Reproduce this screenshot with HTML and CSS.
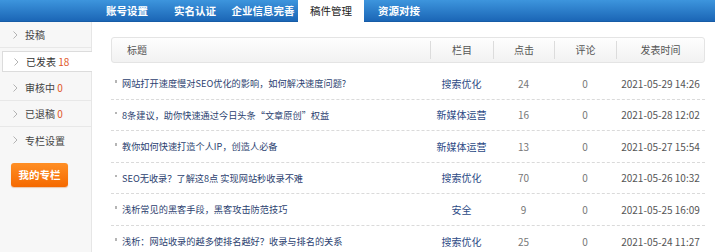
FILE: index.html
```html
<!DOCTYPE html>
<html lang="zh-CN">
<head>
<meta charset="utf-8">
<title>稿件管理</title>
<link rel="stylesheet" href="styles.css">
</head>
<body>
<header class="topbar">
  <nav class="tabs">
    <a class="tab">账号设置</a>
    <a class="tab">实名认证</a>
    <a class="tab">企业信息完善</a>
    <a class="tab active">稿件管理</a>
    <a class="tab">资源对接</a>
  </nav>
</header>
<div class="main">
  <aside class="sidebar">
    <ul class="menu">
      <li class="item"><svg class="arrow" viewBox="0 0 5 8"><polyline points="0.5,0.5 4,4 0.5,7.5"/></svg>投稿</li>
      <li class="item active"><svg class="arrow" viewBox="0 0 5 8"><polyline points="0.5,0.5 4,4 0.5,7.5"/></svg>已发表 <span class="num">18</span></li>
      <li class="item"><svg class="arrow" viewBox="0 0 5 8"><polyline points="0.5,0.5 4,4 0.5,7.5"/></svg>审核中 <span class="num">0</span></li>
      <li class="item"><svg class="arrow" viewBox="0 0 5 8"><polyline points="0.5,0.5 4,4 0.5,7.5"/></svg>已退稿 <span class="num">0</span></li>
      <li class="item last"><svg class="arrow" viewBox="0 0 5 8"><polyline points="0.5,0.5 4,4 0.5,7.5"/></svg>专栏设置</li>
    </ul>
    <a class="btn">我的专栏</a>
  </aside>
  <section class="content">
    <div class="thead">
      <div class="th th-title">标题</div>
      <div class="th">栏目</div>
      <div class="th">点击</div>
      <div class="th">评论</div>
      <div class="th">发表时间</div>
    </div>
    <ul class="rows">
      <li class="row"><span class="t">网站打开速度慢对SEO优化的影响，如何解决速度问题?</span><span class="c">搜索优化</span><span class="n">24</span><span class="n">0</span><span class="d">2021-05-29 14:26</span></li>
      <li class="row"><span class="t">8条建议，助你快速通过今日头条“文章原创”权益</span><span class="c">新媒体运营</span><span class="n">16</span><span class="n">0</span><span class="d">2021-05-28 12:02</span></li>
      <li class="row"><span class="t">教你如何快速打造个人IP，创造人必备</span><span class="c">新媒体运营</span><span class="n">13</span><span class="n">0</span><span class="d">2021-05-27 15:54</span></li>
      <li class="row"><span class="t">SEO无收录？了解这8点 实现网站秒收录不难</span><span class="c">搜索优化</span><span class="n">70</span><span class="n">0</span><span class="d">2021-05-26 10:32</span></li>
      <li class="row"><span class="t">浅析常见的黑客手段，黑客攻击防范技巧</span><span class="c">安全</span><span class="n">9</span><span class="n">0</span><span class="d">2021-05-25 16:09</span></li>
      <li class="row"><span class="t">浅析：网站收录的越多使排名越好？收录与排名的关系</span><span class="c">搜索优化</span><span class="n">25</span><span class="n">0</span><span class="d">2021-05-24 11:27</span></li>
    </ul>
  </section>
</div>
</body>
</html>
```

FILE: styles.css
```css
* { box-sizing: border-box; }
html, body { margin: 0; padding: 0; }
body {
  font-family: "Noto Sans CJK SC", "Microsoft YaHei", sans-serif;
  font-size: 10px;
  color: #333;
  background: #fff;
  overflow: hidden;
}
ul { list-style: none; margin: 0; padding: 0; }

.topbar {
  height: 22px;
  background: linear-gradient(#3d95dd, #1b66b6);
  border-bottom: 1px solid #175ca6;
}
.tabs {
  display: flex;
  gap: 2px;
  padding-left: 94px;
  height: 22px;
}
.tab {
  width: 66px;
  height: 22px;
  line-height: 21px;
  text-align: center;
  color: #fff;
  font-size: 10.5px;
  font-weight: bold;
  white-space: nowrap;
}
.tab.active {
  background: #fff;
  color: #222;
  font-weight: normal;
  height: 23px;
}

.main {
  display: flex;
  height: 230px;
}
.sidebar {
  width: 92px;
  background: #f7f7f7;
  border-right: 1px solid #e6e6e6;
  flex: none;
}
.item {
  display: flex;
  align-items: center;
  height: 26px;
  padding-left: 13px;
  border-bottom: 1px solid #e8e8e8;
  color: #444;
  font-size: 10px;
  white-space: pre;
}
.item.last { border-bottom: none; }
.item.active {
  height: 21px;
  margin: 3px -1px 3px 2px;
  padding-left: 11px;
  background: #fff;
  border: 1px solid #dcdcdc;
  border-right: none;
  color: #333;
}
.arrow {
  width: 5px;
  height: 8px;
  margin-right: 7px;
  fill: none;
  stroke: #aaa;
  stroke-width: 0.9;
}
.num { color: #e0561f; }
.btn {
  display: block;
  width: 57px;
  height: 24px;
  margin: 10px 0 0 11px;
  line-height: 24px;
  text-align: center;
  color: #fff;
  font-size: 10.5px;
  font-weight: bold;
  border-radius: 3px;
  background: linear-gradient(#ff8f25, #f56900);
  box-shadow: 0 1px 1px rgba(200, 90, 0, 0.3);
}

.content {
  flex: 1;
  padding: 15px 10px 0 19px;
}
.thead {
  display: grid;
  grid-template-columns: 318px 63px 61px 62px 1fr;
  align-items: center;
  height: 26px;
  border: 1px solid #e4e4e4;
  border-radius: 3px;
  background: linear-gradient(#fefefe, #f2f2f2);
  color: #555;
  font-size: 10px;
}
.th {
  text-align: center;
  height: 18px;
  line-height: 18px;
  border-left: 1px solid #dcdcdc;
}
.th.th-title {
  text-align: left;
  padding-left: 15px;
  border-left: none;
}
.rows { margin-top: 5px; }
.row {
  display: grid;
  grid-template-columns: 319px 63px 61px 62px 1fr;
  align-items: center;
  height: 31.5px;
  border-bottom: 1px dashed #dadada;
  font-size: 10px;
}
.row:last-child { border-bottom: none; }
.t {
  position: relative;
  padding-left: 11px;
  color: #2c3f70;
  font-size: 9.2px;
  white-space: nowrap;
}
.t::before {
  content: "";
  position: absolute;
  left: 4px;
  top: 4px;
  width: 1.5px;
  height: 2.5px;
  background: #b5b5b5;
}
.c { text-align: center; color: #2b4a85; }
.n { text-align: center; color: #777; }
.d { text-align: center; color: #555; }
```
